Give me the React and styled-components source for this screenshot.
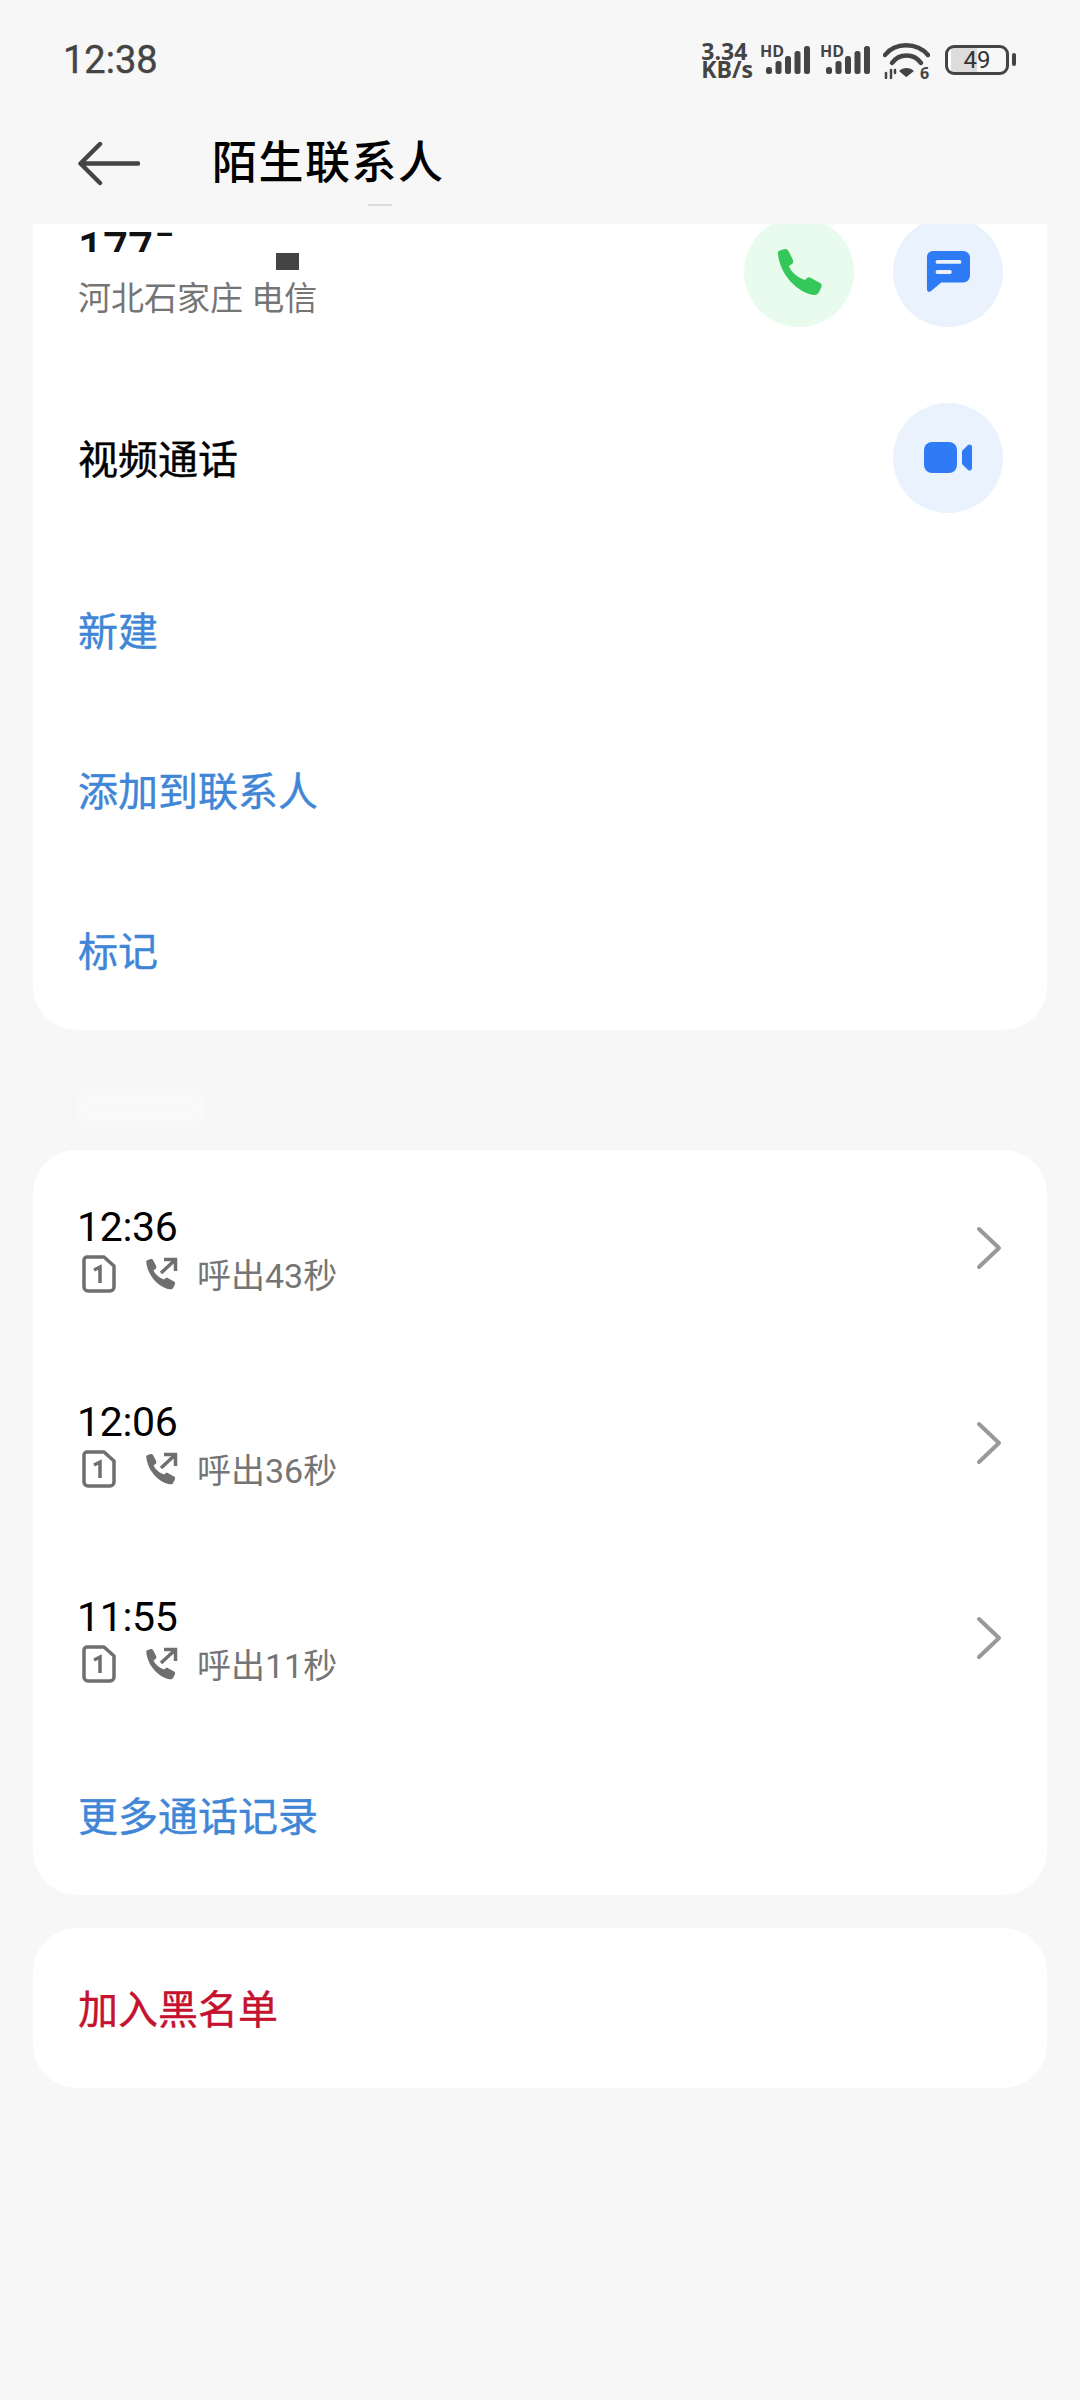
import React from 'react';
import styled, { createGlobalStyle } from 'styled-components';

const CJK = `Roboto, "Noto Sans CJK SC", "Noto Sans", sans-serif`;

const Global = createGlobalStyle`
  html, body { margin: 0; padding: 0; background: #f7f7f7; }
  * { box-sizing: border-box; }
`;

const Screen = styled.div`
  width: 1080px;
  height: 2400px;
  background: #f7f7f7;
  display: flex;
  flex-direction: column;
  overflow: hidden;
  font-family: ${CJK};
`;

const StatusBar = styled.div`
  height: 120px;
  flex: none;
  display: flex;
  align-items: center;
  justify-content: space-between;
  padding: 0 71px 0 63px;
`;

const Clock = styled.div`
  font-size: 38px;
  font-weight: 400;
  -webkit-text-stroke: 0.4px #444;
  color: #444;
`;

const StatusIcons = styled.div`
  display: flex;
  align-items: center;
  gap: 10px;
`;

const Speed = styled.div`
  font-family: "Open Sans", sans-serif;
  font-weight: 700;
  font-size: 23px;
  line-height: 18px;
  color: #444;
  margin-right: -3px;
`;

const SignalWrap = styled.div`
  position: relative;
  width: 50px;
  height: 30px;
`;

const HdTag = styled.span`
  position: absolute;
  left: 0;
  top: -1px;
  font-family: "Open Sans", sans-serif;
  font-weight: 700;
  font-size: 16px;
  line-height: 14px;
  color: #444;
`;

const BarsIcon = styled.svg`
  position: absolute;
  right: 0;
  bottom: 0;
  width: 44px;
  height: 30px;
`;

const WifiIcon = styled.svg`
  width: 47px;
  height: 36px;
  flex: none;
  margin: 2px 3px 0;
`;

const Battery = styled.div`
  position: relative;
  width: 64px;
  height: 30px;
  border: 3px solid #444;
  border-radius: 9px;
  margin-left: 2px;
  display: flex;
  align-items: center;
  justify-content: center;
  font-size: 24px;
  font-weight: 400;
  color: #333;
  background: linear-gradient(90deg, #fff 0 3px, #dcdcdc 3px 50%, transparent 50%);

  &::after {
    content: '';
    position: absolute;
    right: -10px;
    top: 5px;
    width: 4px;
    height: 13px;
    border-radius: 2px;
    background: #444;
  }
`;

const Toolbar = styled.div`
  position: relative;
  height: 104px;
  flex: none;
  display: flex;
  align-items: center;
  padding-left: 78px;
  padding-bottom: 16px;

  &::after {
    content: '';
    position: absolute;
    left: 368px;
    bottom: 18px;
    width: 24px;
    height: 2px;
    background: #dedede;
  }
`;

const BackIcon = styled.svg`
  width: 62px;
  height: 44px;
  flex: none;
`;

const Title = styled.h1`
  margin: 0 0 0 72px;
  font-size: 45px;
  font-weight: 500;
  color: #000;
  letter-spacing: 1.5px;
  line-height: 60px;
`;

const Body = styled.div`
  flex: 1;
  min-height: 0;
  display: flex;
  flex-direction: column;
  padding: 0 33px;
`;

const Card = styled.section`
  background: #fff;
  border-radius: ${p => (p.$cut ? '0 0 44px 44px' : '44px')};
  overflow: hidden;
  flex: none;
`;

const NumberRow = styled.div`
  position: relative;
  height: 154px;
  padding: 0 44px 0 45px;
  display: flex;
  justify-content: space-between;
`;

const NumberCol = styled.div`
  display: flex;
  flex-direction: column;
`;

const ClippedNumber = styled.div`
  height: 28px;
  overflow: hidden;
  font-size: 44px;
  font-weight: 500;
  line-height: 44px;
  word-spacing: -10px;
  color: #111;
  padding-top: 3px;
`;

const Smudge = styled.span`
  position: absolute;
  left: 243px;
  top: 29px;
  width: 23px;
  height: 17px;
  background: #444;
`;

const SubText = styled.div`
  font-size: 33px;
  line-height: 40px;
  color: #757575;
  margin-top: 27px;
`;

const Actions = styled.div`
  display: flex;
  gap: 39px;
  margin-top: -7px;
  height: 110px;
`;

const Round = styled.div`
  width: 110px;
  height: 110px;
  border-radius: 50%;
  background: ${p => (p.$green ? '#e9fbec' : '#e9f2fd')};
  display: flex;
  align-items: center;
  justify-content: center;
  flex: none;
`;

const Row = styled.div`
  height: 160px;
  margin-bottom: ${p => p.$gap || 0}px;
  padding: 0 44px 0 45px;
  display: flex;
  align-items: center;
  justify-content: space-between;
`;

const Label = styled.div`
  font-size: 40px;
  font-weight: 400;
  line-height: 52px;
  padding-top: 5px;
  color: ${p => p.$color || '#000'};
  -webkit-text-stroke: 0.4px ${p => p.$color || '#000'};
`;

const SectionGap = styled.div`
  height: 120px;
  flex: none;
  display: flex;
  align-items: center;
  padding: 38px 0 0 45px;
`;

const FaintLabel = styled.div`
  width: 125px;
  height: 32px;
  background: #f9f9f9;
  filter: blur(4px);
`;

const CallRow = styled.div`
  height: 195px;
  padding: 0 44px 0 45px;
  display: flex;
  align-items: center;
  justify-content: space-between;
`;

const CallInfo = styled.div`
  display: flex;
  flex-direction: column;
  gap: 4px;
  margin: 2px 0 0 -1px;
`;

const CallTime = styled.div`
  font-size: 41px;
  line-height: 46px;
  color: #000;
  letter-spacing: -0.3px;
`;

const CallMeta = styled.div`
  display: flex;
  align-items: center;
  height: 40px;
  font-size: 34px;
  color: #757575;
`;

const MetaText = styled.span`
  margin-left: 18px;
`;

const SimIcon = styled.svg`
  width: 36px;
  height: 38px;
  flex: none;
  margin-left: 4px;
`;

const OutIcon = styled.svg`
  width: 36px;
  height: 36px;
  flex: none;
  margin-left: 26px;
`;

const Chevron = styled.svg`
  width: 28px;
  height: 44px;
  flex: none;
`;

const BlockGap = styled.div`
  height: 33px;
  flex: none;
`;

const BLUE = '#3f86d6';
const RED = '#c4122f';
const HANDSET = 'M2 5C1 3 3 2 5 1L9 0C11 0 12 1 13 3L17 11C17.500 13 17 14 16 15L13 17C15 23 22 29 29 31L31 29C32 28 34 28 35 29L44 34C46 35 46 37 45 39L43 43C42 45 41 46 38 46C22 44 4 26 2 5Z';

const calls = [
  { time: '12:36', text: '呼出43秒' },
  { time: '12:06', text: '呼出36秒' },
  { time: '11:55', text: '呼出11秒' },
];

const Bars = () => (
  <BarsIcon viewBox="0 0 44 30">
    <g fill="#444">
      <rect x="0" y="22" width="6" height="7" rx="2.500" />
      <rect x="9.500" y="16" width="6" height="13" rx="2.500" />
      <rect x="19" y="11" width="6" height="18" rx="2.500" />
      <rect x="28.500" y="6" width="6" height="23" rx="2.500" />
      <rect x="38" y="1" width="6" height="28" rx="2.500" />
    </g>
  </BarsIcon>
);

export default function App() {
  return (
    <Screen>
      <Global />
      <StatusBar>
        <Clock>12:38</Clock>
        <StatusIcons>
          <Speed>3.34<br />KB/s</Speed>
          <SignalWrap><HdTag>HD</HdTag><Bars /></SignalWrap>
          <SignalWrap><HdTag>HD</HdTag><Bars /></SignalWrap>
          <WifiIcon viewBox="0 0 47 36">
            <g fill="none" stroke="#444" strokeWidth="4.500" strokeLinecap="round">
              <path d="M2 12C12 -1 34 -1 45 12" />
              <path d="M9 20C16 10 31 10 38 20" />
            </g>
            <path d="M16 28C20 24 27 24 31 28L24 33.500C23.500 34 23 34 22.500 33.500Z" fill="#444" />
            <g stroke="#444" strokeWidth="2.500" strokeLinecap="round">
              <path d="M3 30V35" /><path d="M8 27V35" /><path d="M12 27V30" />
            </g>
            <text x="37" y="36" fontSize="16" fontWeight="700" fontFamily="Open Sans" fill="#444">6</text>
          </WifiIcon>
          <Battery>49</Battery>
        </StatusIcons>
      </StatusBar>

      <Toolbar>
        <BackIcon viewBox="0 0 62 44">
          <path d="M60 21.500H3M22 2L2.500 21.500L22 41" fill="none" stroke="#444" strokeWidth="4.500" strokeLinecap="round" strokeLinejoin="round" />
        </BackIcon>
        <Title>陌生联系人</Title>
      </Toolbar>

      <Body>
        <Card $cut>
          <NumberRow>
            <NumberCol>
              <ClippedNumber>177 ¯</ClippedNumber>
              <SubText>河北石家庄 电信</SubText>
            </NumberCol>
            <Smudge />
            <Actions>
              <Round $green>
                <svg width="46" height="46" viewBox="0 0 46 46">
                  <path d={HANDSET} fill="#34c759" />
                </svg>
              </Round>
              <Round>
                <svg width="44" height="44" viewBox="0 0 46 46">
                  <path d="M7 1H39A7 7 0 0 1 46 8V27A7 7 0 0 1 39 34H16L5 43C3 44.500 1 43.500 1 41V7A6 6 0 0 1 7 1Z" fill="#2f7bf6" />
                  <path d="M12 12.500H35M12 23H25" stroke="#eaf2fd" strokeWidth="4" strokeLinecap="round" />
                </svg>
              </Round>
            </Actions>
          </NumberRow>

          <Row $gap={12}>
            <Label>视频通话</Label>
            <Round>
              <svg width="48" height="32" viewBox="0 0 48 32">
                <rect x="0" y="0" width="33" height="31" rx="8" fill="#2f7bf6" />
                <path d="M38 9L44 3C46 1.500 48 3 48 5V26C48 28 46 29.500 44 28L38 22Z" fill="#2f7bf6" />
              </svg>
            </Round>
          </Row>
          <Row><Label $color={BLUE}>新建</Label></Row>
          <Row><Label $color={BLUE}>添加到联系人</Label></Row>
          <Row><Label $color={BLUE}>标记</Label></Row>
        </Card>

        <SectionGap><FaintLabel /></SectionGap>

        <Card>
          {calls.map(c => (
            <CallRow key={c.time}>
              <CallInfo>
                <CallTime>{c.time}</CallTime>
                <CallMeta>
                  <SimIcon viewBox="0 0 36 38">
                    <path d="M6 2H23L33 11V32A4 4 0 0 1 29 36H7A4 4 0 0 1 3 32V5A3 3 0 0 1 6 2Z" fill="none" stroke="#6f6f6f" strokeWidth="3.500" strokeLinejoin="round" />
                    <path d="M13 15L19 12V28" fill="none" stroke="#6f6f6f" strokeWidth="3.500" />
                  </SimIcon>
                  <OutIcon viewBox="0 0 36 36">
                    <path d={HANDSET} transform="translate(2 3) scale(0.66)" fill="#6f6f6f" />
                    <path d="M18 17L32 4M21 3.500H32.500V15" fill="none" stroke="#6f6f6f" strokeWidth="3.500" />
                  </OutIcon>
                  <MetaText>{c.text}</MetaText>
                </CallMeta>
              </CallInfo>
              <Chevron viewBox="0 0 28 44">
                <path d="M4 3L24 22L4 41" fill="none" stroke="#999" strokeWidth="4" strokeLinecap="round" strokeLinejoin="round" />
              </Chevron>
            </CallRow>
          ))}
          <Row><Label $color={BLUE}>更多通话记录</Label></Row>
        </Card>

        <BlockGap />

        <Card>
          <Row><Label $color={RED}>加入黑名单</Label></Row>
        </Card>
      </Body>
    </Screen>
  );
}
